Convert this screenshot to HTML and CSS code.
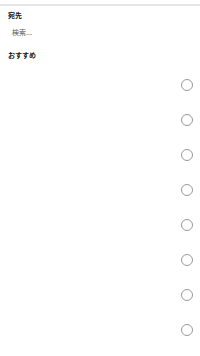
FILE: index.html
```html
<!DOCTYPE html>
<html lang="ja">
<head>
    <meta charset="UTF-8">
    <meta name="viewport" content="width=device-width, initial-scale=1.0">
    <title>宛先</title>
    <link rel="stylesheet" href="styles.css">
</head>
<body>
    <div class="topline"></div>

    <div class="panel">
        <div class="label">宛先</div>
        <div class="search">検索...</div>
        <div class="label suggest">おすすめ</div>

        <ul class="list">
            <li class="row"><span class="radio"></span></li>
            <li class="row"><span class="radio"></span></li>
            <li class="row"><span class="radio"></span></li>
            <li class="row"><span class="radio"></span></li>
            <li class="row"><span class="radio"></span></li>
            <li class="row"><span class="radio"></span></li>
            <li class="row"><span class="radio"></span></li>
            <li class="row"><span class="radio"></span></li>
        </ul>
    </div>
</body>
</html>
```

FILE: styles.css
```css
/* Page de base */
body {
    margin: 0;
    padding: 0;
    background: #fff;
    font-family: "Noto Sans CJK JP", "Noto Sans", sans-serif;
    color: #111;
}

/* Ligne grise en haut */
.topline {
    margin-top: 4px;
    height: 2px;
    background: #e6e6e6;
}

.panel {
    padding: 0 7px 0 8px;
}

/* Titres de section */
.label {
    font-size: 7px;
    font-weight: bold;
    line-height: 10px;
    margin-top: 4px;
}

.search {
    font-size: 7px;
    line-height: 10px;
    color: #555;
    margin-top: 7px;
    padding-left: 4px;
}

.suggest {
    margin-top: 13px;
}

/* Liste des contacts */
.list {
    list-style: none;
    margin: 7px 0 0;
    padding: 0;
}

.row {
    height: 35px;
    display: flex;
    align-items: center;
    justify-content: flex-end;
}

.radio {
    width: 10px;
    height: 10px;
    border: 1px solid #999;
    border-radius: 50%;
}
```
